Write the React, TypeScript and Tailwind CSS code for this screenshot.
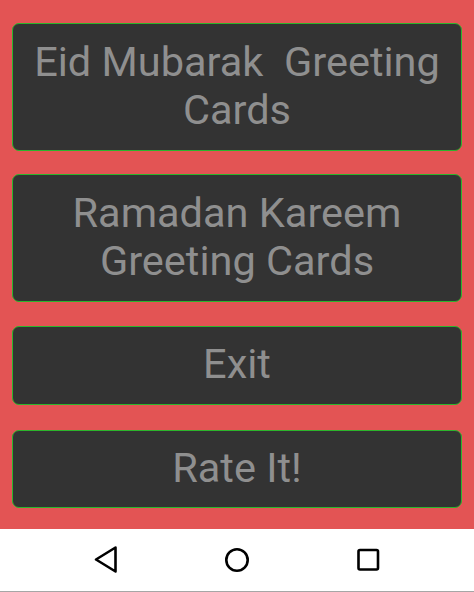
import React from "react";

const btn =
  "mx-[12px] flex items-center justify-center rounded-[7px] border border-[#2cb52c] bg-[#333333] text-center text-[41.5px] leading-[48.5px] text-[#8f8f8f]";

export default function App() {
  return (
    <div
      className="flex h-[592px] w-[474px] flex-col overflow-hidden"
      style={{ fontFamily: "Roboto, 'Liberation Sans', sans-serif" }}
    >
      <div className="flex h-[529px] flex-col bg-[#e35454] pt-[23px]">
        <div className={`${btn} h-[128px] pb-[2px]`}>
          <span className="whitespace-pre">
            Eid Mubarak  Greeting
            <br />
            Cards
          </span>
        </div>
        <div className={`${btn} mt-[23px] h-[128px] pb-[2px]`}>
          <span>
            Ramadan Kareem
            <br />
            Greeting Cards
          </span>
        </div>
        <div className={`${btn} mt-[24px] h-[79px] pb-[2px]`}>Exit</div>
        <div className={`${btn} mt-[25px] h-[78px] pb-[2px]`}>Rate It!</div>
      </div>
      <div className="flex h-[62px] items-center bg-white">
        <div className="relative h-full w-full">
          <svg
            className="absolute left-[93px] top-[16px]"
            width="26"
            height="29"
            viewBox="0 0 26 29"
          >
            <path
              d="M22.5 2.5 L3 14.5 L22.5 26.5 Z"
              fill="none"
              stroke="#000"
              strokeWidth="2.6"
              strokeLinejoin="round"
            />
          </svg>
          <svg
            className="absolute left-[224px] top-[18px]"
            width="26"
            height="26"
            viewBox="0 0 26 26"
          >
            <circle cx="13" cy="13" r="10.7" fill="none" stroke="#000" strokeWidth="2.6" />
          </svg>
          <svg
            className="absolute left-[356px] top-[19px]"
            width="25"
            height="24"
            viewBox="0 0 25 24"
          >
            <rect
              x="2.5"
              y="2"
              width="19.5"
              height="19.5"
              rx="1.5"
              fill="none"
              stroke="#000"
              strokeWidth="2.6"
            />
          </svg>
        </div>
      </div>
      <div className="h-[1px] bg-[#a6a6a6]" />
    </div>
  );
}
